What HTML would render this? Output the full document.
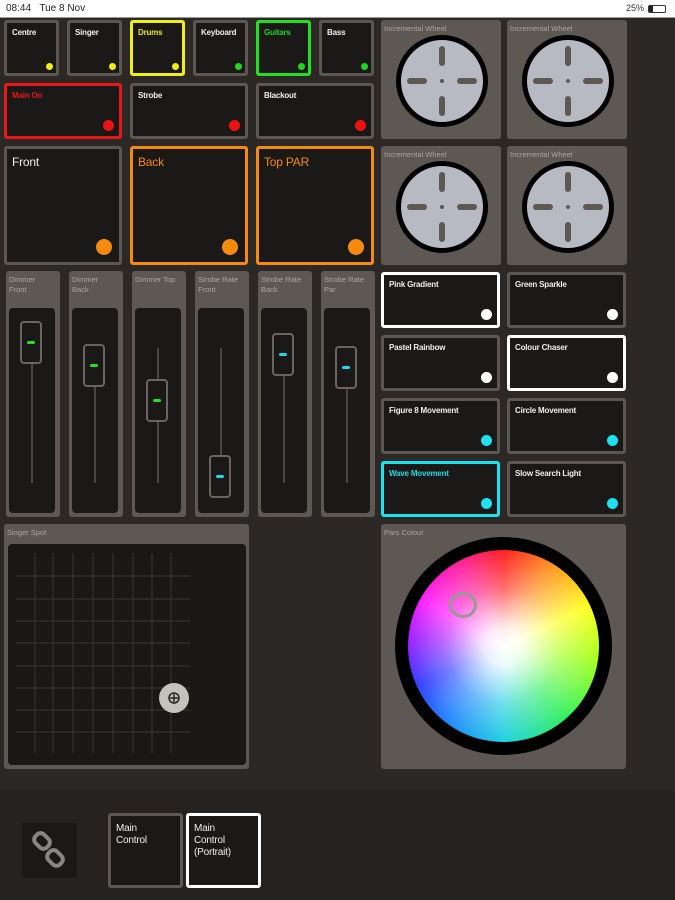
<!DOCTYPE html>
<html><head><meta charset="utf-8"><style>
*{margin:0;padding:0;box-sizing:border-box}
body{width:675px;height:900px;background:#2c2825;position:relative;overflow:hidden;font-family:"Liberation Sans",sans-serif}
.a{position:absolute}
.b{position:absolute;background:#1b1918;border:3px solid #5c5753;border-radius:3px}
.t{position:absolute;left:5px;top:5px;font-size:8px;color:#eee;font-weight:bold;letter-spacing:-0.2px;line-height:10px}
.d{position:absolute;border-radius:50%}
.p{position:absolute;background:#5d5854;border-radius:3px}
.pl{position:absolute;left:3px;top:4px;font-size:7.5px;color:#aaa59f;line-height:10px}
.tr{position:absolute;background:#1b1918;border-radius:4px}
.ln{position:absolute;width:2px;background:#4a4643}
.kn{position:absolute;width:22px;height:43px;border:2px solid #6a6561;border-radius:4px;background:#1b1918}
.kn i{position:absolute;left:5px;top:18px;width:8px;height:3px;border-radius:2px}
.wh{position:absolute;width:92px;height:92px;border-radius:50%;background:#b7bac2;border:5px solid #000}
.wh i{position:absolute;background:#5e5852;border-radius:3px}
</style></head><body>
<div class="a" style="left:0;top:0;width:675px;height:18px;background:#fff;border-bottom:1px solid #999"></div>
<div class="a" style="left:6px;top:3px;font-size:10px;color:#222">08:44&nbsp;&nbsp;&nbsp;Tue 8 Nov</div>
<div class="a" style="left:626px;top:3px;font-size:9px;color:#333">25%</div>
<div class="a" style="left:648px;top:5px;width:18px;height:8px;border:1px solid #333;border-radius:2px"><div style="width:4px;height:6px;background:#222"></div></div>

<div class="b" style="left:4px;top:20px;width:55px;height:56px"><div class="t">Centre</div><div class="d" style="right:3px;bottom:3px;width:7px;height:7px;background:#f0ec14"></div></div>
<div class="b" style="left:67px;top:20px;width:55px;height:56px"><div class="t">Singer</div><div class="d" style="right:3px;bottom:3px;width:7px;height:7px;background:#f0ec14"></div></div>
<div class="b" style="left:130px;top:20px;width:55px;height:56px;border-color:#f2ee18"><div class="t" style="color:#e7e41a">Drums</div><div class="d" style="right:3px;bottom:3px;width:7px;height:7px;background:#f0ec14"></div></div>
<div class="b" style="left:193px;top:20px;width:55px;height:56px"><div class="t">Keyboard</div><div class="d" style="right:3px;bottom:3px;width:7px;height:7px;background:#1ed81e"></div></div>
<div class="b" style="left:256px;top:20px;width:55px;height:56px;border-color:#20e020"><div class="t" style="color:#22d022">Guitars</div><div class="d" style="right:3px;bottom:3px;width:7px;height:7px;background:#1ed81e"></div></div>
<div class="b" style="left:319px;top:20px;width:55px;height:56px"><div class="t">Bass</div><div class="d" style="right:3px;bottom:3px;width:7px;height:7px;background:#1ed81e"></div></div>

<div class="b" style="left:4px;top:83px;width:118px;height:56px;border-color:#e81818"><div class="t" style="color:#e81818">Main On</div><div class="d" style="right:5px;bottom:5px;width:11px;height:11px;background:#ee1111"></div></div>
<div class="b" style="left:130px;top:83px;width:118px;height:56px"><div class="t">Strobe</div><div class="d" style="right:5px;bottom:5px;width:11px;height:11px;background:#ee1111"></div></div>
<div class="b" style="left:256px;top:83px;width:118px;height:56px"><div class="t">Blackout</div><div class="d" style="right:5px;bottom:5px;width:11px;height:11px;background:#ee1111"></div></div>

<div class="b" style="left:4px;top:146px;width:118px;height:119px"><div class="t" style="font-size:12px;top:6px;line-height:14px;font-weight:normal">Front</div><div class="d" style="right:7px;bottom:7px;width:16px;height:16px;background:#f58a0c"></div></div>
<div class="b" style="left:130px;top:146px;width:118px;height:119px;border-color:#f58a0c"><div class="t" style="font-size:12px;top:6px;line-height:14px;font-weight:normal;color:#f58a0c">Back</div><div class="d" style="right:7px;bottom:7px;width:16px;height:16px;background:#f58a0c"></div></div>
<div class="b" style="left:256px;top:146px;width:118px;height:119px;border-color:#f58a0c"><div class="t" style="font-size:12px;top:6px;line-height:14px;font-weight:normal;color:#f58a0c">Top PAR</div><div class="d" style="right:7px;bottom:7px;width:16px;height:16px;background:#f58a0c"></div></div>

<div class="p" style="left:381px;top:20px;width:120px;height:119px"><div class="pl">Incremental Wheel</div></div>
<div class="p" style="left:507px;top:20px;width:120px;height:119px"><div class="pl">Incremental Wheel</div></div>
<div class="p" style="left:381px;top:146px;width:120px;height:119px"><div class="pl">Incremental Wheel</div></div>
<div class="p" style="left:507px;top:146px;width:120px;height:119px"><div class="pl">Incremental Wheel</div></div>
<div class="wh" style="left:396px;top:35px"><i style="left:38px;top:6px;width:6px;height:20px"></i><i style="left:38px;top:56px;width:6px;height:20px"></i><i style="left:6px;top:38px;width:20px;height:6px"></i><i style="left:56px;top:38px;width:20px;height:6px"></i><i style="left:39px;top:39px;width:4px;height:4px;border-radius:50%"></i></div>
<div class="wh" style="left:522px;top:35px"><i style="left:38px;top:6px;width:6px;height:20px"></i><i style="left:38px;top:56px;width:6px;height:20px"></i><i style="left:6px;top:38px;width:20px;height:6px"></i><i style="left:56px;top:38px;width:20px;height:6px"></i><i style="left:39px;top:39px;width:4px;height:4px;border-radius:50%"></i></div>
<div class="wh" style="left:396px;top:161px"><i style="left:38px;top:6px;width:6px;height:20px"></i><i style="left:38px;top:56px;width:6px;height:20px"></i><i style="left:6px;top:38px;width:20px;height:6px"></i><i style="left:56px;top:38px;width:20px;height:6px"></i><i style="left:39px;top:39px;width:4px;height:4px;border-radius:50%"></i></div>
<div class="wh" style="left:522px;top:161px"><i style="left:38px;top:6px;width:6px;height:20px"></i><i style="left:38px;top:56px;width:6px;height:20px"></i><i style="left:6px;top:38px;width:20px;height:6px"></i><i style="left:56px;top:38px;width:20px;height:6px"></i><i style="left:39px;top:39px;width:4px;height:4px;border-radius:50%"></i></div>

<div class="p" style="left:6px;top:271px;width:54px;height:246px"><div class="pl">Dimmer<br>Front</div><div class="tr" style="left:3px;top:37px;width:46px;height:205px"></div><div class="ln" style="left:25px;top:77px;height:135px"></div><div class="kn" style="left:14px;top:50px"><i style="background:#22e022"></i></div></div>
<div class="p" style="left:69px;top:271px;width:54px;height:246px"><div class="pl">Dimmer<br>Back</div><div class="tr" style="left:3px;top:37px;width:46px;height:205px"></div><div class="ln" style="left:25px;top:77px;height:135px"></div><div class="kn" style="left:14px;top:73px"><i style="background:#22e022"></i></div></div>
<div class="p" style="left:132px;top:271px;width:54px;height:246px"><div class="pl">Dimmer Top</div><div class="tr" style="left:3px;top:37px;width:46px;height:205px"></div><div class="ln" style="left:25px;top:77px;height:135px"></div><div class="kn" style="left:14px;top:108px"><i style="background:#22e022"></i></div></div>
<div class="p" style="left:195px;top:271px;width:54px;height:246px"><div class="pl">Strobe Rate<br>Front</div><div class="tr" style="left:3px;top:37px;width:46px;height:205px"></div><div class="ln" style="left:25px;top:77px;height:135px"></div><div class="kn" style="left:14px;top:184px"><i style="background:#22d8e6"></i></div></div>
<div class="p" style="left:258px;top:271px;width:54px;height:246px"><div class="pl">Strobe Rate<br>Back</div><div class="tr" style="left:3px;top:37px;width:46px;height:205px"></div><div class="ln" style="left:25px;top:77px;height:135px"></div><div class="kn" style="left:14px;top:62px"><i style="background:#22d8e6"></i></div></div>
<div class="p" style="left:321px;top:271px;width:54px;height:246px"><div class="pl">Strobe Rate<br>Par</div><div class="tr" style="left:3px;top:37px;width:46px;height:205px"></div><div class="ln" style="left:25px;top:77px;height:135px"></div><div class="kn" style="left:14px;top:75px"><i style="background:#22d8e6"></i></div></div>

<div class="b" style="left:381px;top:272px;width:119px;height:56px;border-color:#fff"><div class="t">Pink Gradient</div><div class="d" style="right:5px;bottom:5px;width:11px;height:11px;background:#fff"></div></div>
<div class="b" style="left:507px;top:272px;width:119px;height:56px"><div class="t">Green Sparkle</div><div class="d" style="right:5px;bottom:5px;width:11px;height:11px;background:#fff"></div></div>
<div class="b" style="left:381px;top:335px;width:119px;height:56px"><div class="t">Pastel Rainbow</div><div class="d" style="right:5px;bottom:5px;width:11px;height:11px;background:#fff"></div></div>
<div class="b" style="left:507px;top:335px;width:119px;height:56px;border-color:#fff"><div class="t">Colour Chaser</div><div class="d" style="right:5px;bottom:5px;width:11px;height:11px;background:#fff"></div></div>
<div class="b" style="left:381px;top:398px;width:119px;height:56px"><div class="t">Figure 8 Movement</div><div class="d" style="right:5px;bottom:5px;width:11px;height:11px;background:#1ee0ee"></div></div>
<div class="b" style="left:507px;top:398px;width:119px;height:56px"><div class="t">Circle Movement</div><div class="d" style="right:5px;bottom:5px;width:11px;height:11px;background:#1ee0ee"></div></div>
<div class="b" style="left:381px;top:461px;width:119px;height:56px;border-color:#1ee0ee"><div class="t" style="color:#1ed8e6">Wave Movement</div><div class="d" style="right:5px;bottom:5px;width:11px;height:11px;background:#1ee0ee"></div></div>
<div class="b" style="left:507px;top:461px;width:119px;height:56px"><div class="t">Slow Search Light</div><div class="d" style="right:5px;bottom:5px;width:11px;height:11px;background:#1ee0ee"></div></div>

<div class="p" style="left:4px;top:524px;width:245px;height:245px"><div class="pl">Singer Spot</div>
<div class="tr" style="left:4px;top:20px;width:238px;height:221px;background:#1a1817">
<svg width="238" height="221" style="position:absolute;left:0;top:0">
<g stroke="#3a3734" stroke-width="1">
<line x1="27" y1="9" x2="27" y2="209"/><line x1="45" y1="9" x2="45" y2="209"/><line x1="65" y1="9" x2="65" y2="209"/><line x1="85" y1="9" x2="85" y2="209"/><line x1="105" y1="9" x2="105" y2="209"/><line x1="125" y1="9" x2="125" y2="209"/><line x1="144" y1="9" x2="144" y2="209"/><line x1="163" y1="9" x2="163" y2="209"/>
<line x1="8" y1="32" x2="182" y2="32"/><line x1="8" y1="55" x2="182" y2="55"/><line x1="8" y1="77" x2="182" y2="77"/><line x1="8" y1="99" x2="182" y2="99"/><line x1="8" y1="122" x2="182" y2="122"/><line x1="8" y1="144" x2="182" y2="144"/><line x1="8" y1="166" x2="182" y2="166"/><line x1="8" y1="188" x2="182" y2="188"/>
</g>
<circle cx="166" cy="154" r="15" fill="#c5c2be"/>
<circle cx="166" cy="154" r="5" fill="none" stroke="#222" stroke-width="1.5"/>
<line x1="166" y1="150" x2="166" y2="158" stroke="#222" stroke-width="1.5"/><line x1="162" y1="154" x2="170" y2="154" stroke="#222" stroke-width="1.5"/>
</svg></div></div>

<div class="p" style="left:381px;top:524px;width:245px;height:245px"><div class="pl">Pars Colour</div>
<div class="a" style="left:14px;top:13px;width:217px;height:218px;border-radius:50%;background:#000"></div>
<div class="a" style="left:27px;top:26px;width:191px;height:192px;border-radius:50%;background:conic-gradient(#ff2020,#ff9020 30deg,#ffff20 65deg,#a0ff20 100deg,#30f060 140deg,#20d0e0 180deg,#2080ff 220deg,#3040ff 245deg,#a020ff 275deg,#ff20ff 300deg,#ff2090 335deg,#ff2020)"></div>
<div class="a" style="left:27px;top:26px;width:191px;height:192px;border-radius:50%;background:radial-gradient(closest-side,#fff 0%,rgba(255,255,255,.9) 20%,rgba(255,255,255,.35) 60%,rgba(255,255,255,0) 100%)"></div>
<div class="a" style="left:68px;top:68px;width:28px;height:26px;border-radius:50%;border:3px solid #9a9896"></div>
</div>

<div class="a" style="left:0;top:790px;width:675px;height:110px;background:#252220"></div>
<div class="a" style="left:22px;top:823px;width:55px;height:55px;background:#1b1918;border-radius:2px">
<svg width="55" height="55"><g fill="none" stroke="#8a8582" stroke-width="4"><rect x="12" y="12" width="16" height="12" rx="5" transform="rotate(45 20 18)"/><rect x="25" y="29" width="16" height="12" rx="5" transform="rotate(45 33 35)"/></g></svg></div>
<div class="b" style="left:108px;top:813px;width:75px;height:75px"><div class="t" style="font-size:10px;line-height:12px;font-weight:normal;top:7px">Main<br>Control</div></div>
<div class="b" style="left:186px;top:813px;width:75px;height:75px;border-color:#fff"><div class="t" style="font-size:10px;line-height:12px;font-weight:normal;top:7px">Main<br>Control<br>(Portrait)</div></div>
</body></html>
